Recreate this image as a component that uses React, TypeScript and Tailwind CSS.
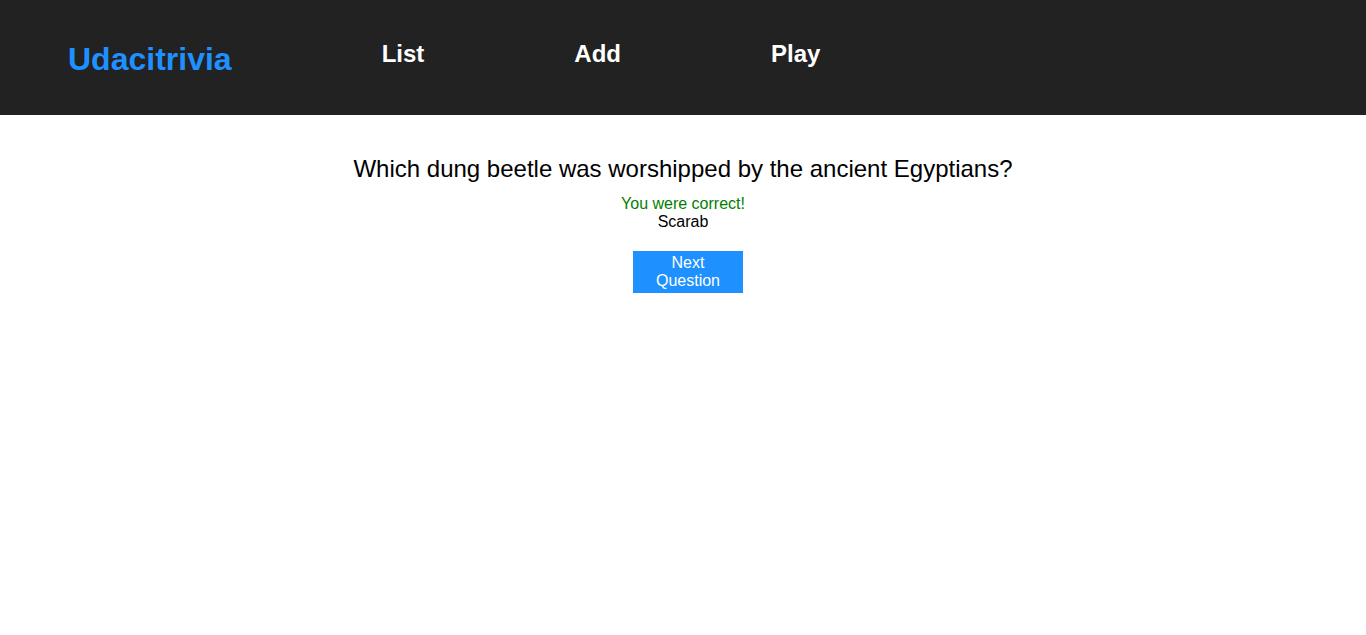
import React from 'react';

const navItems = ['List', 'Add', 'Play'];

export default function App() {
  return (
    <div className="min-h-screen bg-white text-black font-['Liberation_Sans',Arial,sans-serif]">
      {/* Header */}
      <header className="flex h-[115px] bg-[#222222] pt-[20px] pl-[68px] text-white">
        <h1 className="mt-[21.44px] mr-[150px] cursor-pointer text-[32px] font-bold leading-[36.8px] text-[#1e90ff]">
          Udacitrivia
        </h1>
        {navItems.map((item) => (
          <h2
            key={item}
            className="mt-[19.92px] mr-[150px] cursor-pointer text-[24px] font-bold leading-[27.6px]"
          >
            {item}
          </h2>
        ))}
      </header>

      {/* Quiz */}
      <div className="flex flex-col items-center pt-[40px] text-center">
        <div className="text-[24px] leading-[27.6px]">
          Which dung beetle was worshipped by the ancient Egyptians?
        </div>
        <div className="mt-[12px] text-[16px] leading-[18.4px] text-[#008000]">You were correct!</div>
        <div className="text-[16px] leading-[18.4px]">Scarab</div>
        <button className="mt-[20px] ml-[10px] flex h-[42px] w-[110px] items-center justify-center bg-[#1e90ff] px-[6px] text-[16px] leading-[18px] text-white">
          Next Question
        </button>
      </div>
    </div>
  );
}
